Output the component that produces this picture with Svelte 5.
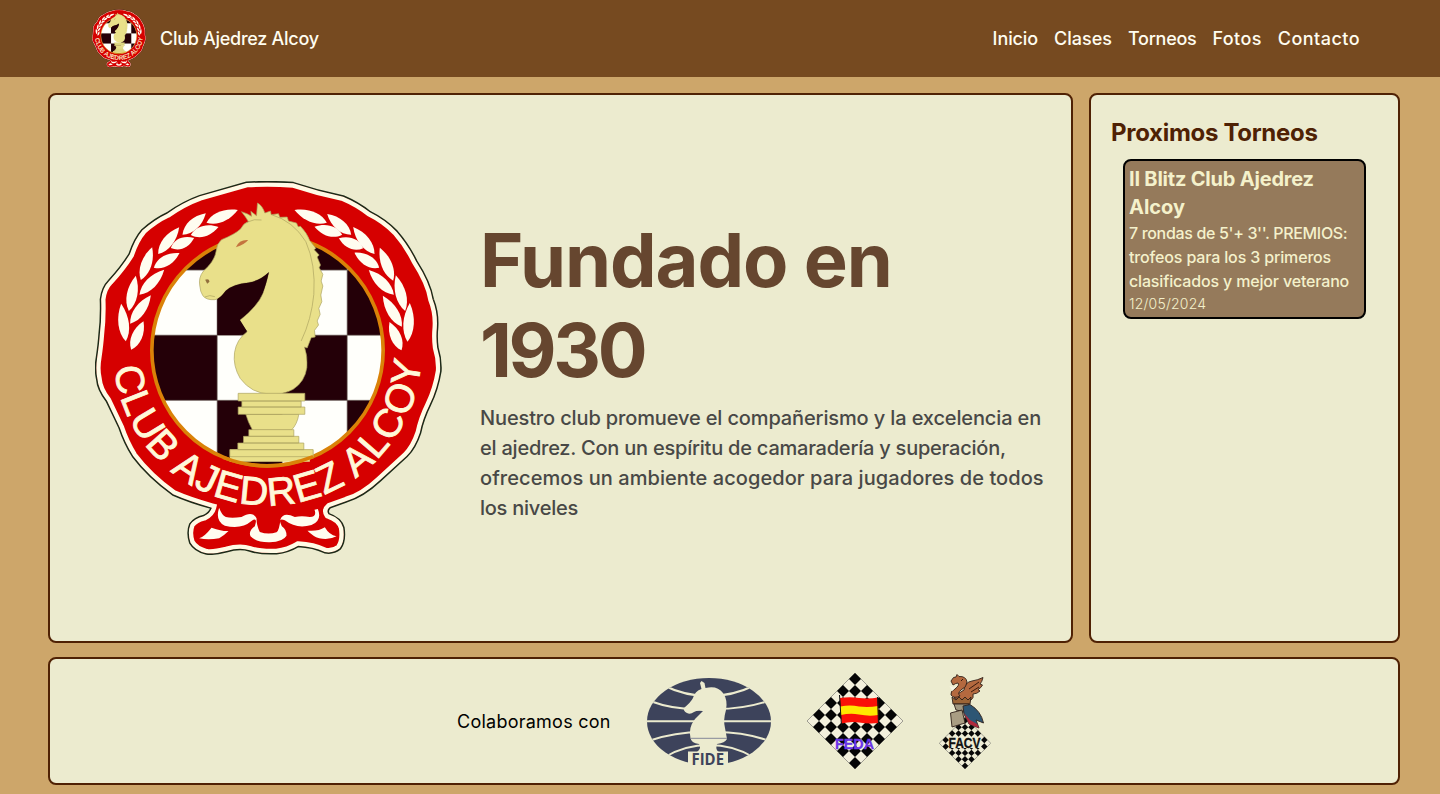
<script>
  const nav = [
    { label: 'Inicio', ls: -0.1 },
    { label: 'Clases', ls: 0 },
    { label: 'Torneos', ls: -0.27 },
    { label: 'Fotos', ls: 0.4 },
    { label: 'Contacto', ls: 0.45 }
  ];

  const outline =
    'M500 36 Q570 32 640 37 Q715 62 790 77 Q835 96 870 124 Q915 146 950 182 Q985 222 1008 270 Q1050 335 1058 385 Q1074 425 1071 470 Q1068 500 1072 530 Q1083 565 1081 600 Q1072 655 1050 700 Q1028 745 1020 785 Q1005 830 980 855 L900 928 Q850 975 800 990 L750 1008 Q738 1018 746 1030 Q782 1042 790 1070 Q796 1110 780 1132 Q760 1148 735 1143 Q700 1126 655 1124 Q625 1142 590 1146 Q540 1148 510 1138 Q480 1128 440 1140 Q400 1150 380 1147 Q345 1138 332 1115 Q322 1085 332 1060 Q345 1042 372 1036 Q392 1026 396 1010 Q330 992 280 970 Q205 915 160 855 Q135 815 120 770 L82 690 Q55 655 53 625 Q46 595 52 560 Q58 520 60 490 Q66 440 64 385 Q68 350 88 330 Q125 290 150 250 Q165 205 188 178 Q225 145 262 128 Q310 94 360 76 Z';

  const leaves = [
    [380, 155, 474, 117], [308, 191, 378, 127], [235, 249, 298, 169], [183, 327, 217, 229], [147, 420, 168, 314], [138, 511, 124, 398],
    [333, 192, 416, 168], [273, 231, 343, 201], [222, 290, 299, 246], [179, 371, 253, 296], [151, 458, 213, 373], [154, 536, 191, 451],
    [741, 155, 644, 117], [814, 191, 742, 129], [884, 249, 820, 168], [940, 329, 900, 230], [976, 420, 948, 313], [983, 512, 990, 396],
    [787, 191, 704, 167], [850, 232, 777, 202], [898, 290, 824, 245], [942, 371, 867, 297], [966, 467, 909, 374], [965, 538, 929, 453]
  ];

  function leaf([x1, y1, x2, y2]) {
    const dx = x2 - x1, dy = y2 - y1, l = Math.hypot(dx, dy);
    const nx = (-dy / l) * 21, ny = (dx / l) * 21;
    const p = (t, s) => `${(x1 + dx * t + nx * s).toFixed(1)} ${(y1 + dy * t + ny * s).toFixed(1)}`;
    return `M${x1} ${y1}C${p(0.25, 1)} ${p(0.65, 1)} ${x2} ${y2}C${p(0.65, -1)} ${p(0.25, -1)} ${x1} ${y1}Z`;
  }

  const board = [];
  for (let r = 0; r < 5; r++)
    for (let c = 0; c < 4; c++) if ((r + c) % 2 === 0) board.push([217 + c * 195, 102 + r * 195.3]);

  const cells = [];
  for (let r = 0; r < 8; r++) for (let c = 0; c < 8; c++) if ((r + c) % 2 === 0) cells.push([c, r]);
</script>

{#snippet crest(id, cls, rim)}
  <svg class={cls} viewBox="46 30 1040 1122" role="img" aria-label="Escudo">
    <defs>
      <clipPath id="{id}-edge"><path d={outline} /></clipPath>
      <clipPath id="{id}-disc"><circle cx="563" cy="538" r="345" /></clipPath>
      <path id="{id}-arc" d="M101 541 A462 462 0 0 0 1025 541" />
    </defs>
    <path d={outline} fill="#d60000" stroke="#1d2a18" stroke-width="9" />
    <g clip-path="url(#{id}-edge)">
      <path d={outline} fill="#d60000" stroke="#fffbe6" stroke-width={rim} />
    </g>
    {#each leaves as l}
      <path d={leaf(l)} fill="#fffdf0" />
    {/each}
    <circle cx="563" cy="538" r="347" fill="#fffffb" />
    <g clip-path="url(#{id}-disc)">
      {#each board as [x, y]}
        <rect {x} {y} width="195" height="195.3" fill="#240008" />
      {/each}
      <path d="M412 180V900M607 180V900M802 180V900M200 297H930M200 492.600H930M200 688H930" stroke="#675b55" stroke-width="2" fill="none" />
    </g>
    <circle cx="563" cy="538" r="347" fill="none" stroke="#da8208" stroke-width="11" />
    <g fill="#e9e08a" stroke="#aaa25f" stroke-width="2">
      <path d="M533 96 Q548 104 555 126 L572 120 L574 131 L596 128 L600 139 L622 138 L626 150 L650 156 L655 167 L662 166 Q682 187 690 209 L708 232 L703 236 L718 252 L712 258 L722 282 L718 290 L729 310 L724 330 L729 345 L723 372 L726 392 L717 412 L721 430 L712 450 L716 462 L704 478 L706 498 L694 500 L682 531 L674 528 Q684 556 681 590 Q675 632 640 655 Q610 672 570 669 Q515 668 481 622 Q459 585 464 545 Q470 505 502 482 L477 450 Q535 405 550 365 Q560 335 567 304 Q540 330 505 335 Q460 339 438 359 Q420 384 405 386 Q380 388 369 374 Q361 362 360 345 Q355 320 371 300 Q405 270 409 240 Q411 218 425 206 Q465 190 482 174 Q492 155 506 152 Q498 138 485 122 Q505 128 515 136 L513 121 L530 134 Z" />
      <path d="M450 835H700V858H690V872H450Z" stroke="none" />
      <path d="M498 730H657Q652 760 635 777H518Q505 755 498 730Z" />
      <path d="M475 667H675V690H475ZM486 690H664V708H486ZM475 708H675V730H475ZM507 776H642V796H507ZM491 796H657V816H491ZM474 816H672V836H474ZM450 836H700V857H450Z" />
      <path d="M575 131Q640 150 678 212Q708 280 702 370Q695 445 664 510M500 154Q525 142 545 147M375 378Q390 370 405 377" fill="none" />
    </g>
    <path d="M468 229Q478 205 505 207Q495 220 468 229Z" fill="#c4743e" />
    <path d="M376 326Q388 322 389 332L382 338Z" fill="#926f3c" />
    <path d="M567 304Q558 345 548 367Q525 412 480 446L501 480Q485 491 476 492H413V384Q426 376 438 359Q460 339 505 335Q540 330 567 304Z" fill="#240008" />
    <path d="M430 859Q563 911 700 857" fill="none" stroke="#da8208" stroke-width="11" />
    <text font-family="Liberation Sans, sans-serif" font-size="119" fill="#fff8d9" stroke="#fff8d9" stroke-width="2.500" textLength="1372">
      <textPath href="#{id}-arc" startOffset="50" textLength="1372">CLUB AJEDREZ ALCOY</textPath>
    </text>
    <g fill="#fffdf0">
      <path d="M418 1010Q405 1050 435 1064Q485 1076 515 1050Q535 1036 525 1066Q505 1080 512 1096Q530 1115 570 1114Q610 1112 620 1094Q620 1075 606 1066Q592 1038 615 1048Q650 1075 695 1062Q728 1048 714 1014L704 1016Q712 1038 690 1038Q665 1034 645 1038Q610 1022 602 1045Q598 1080 590 1084Q565 1092 540 1083Q530 1064 530 1042Q518 1018 485 1038Q455 1042 438 1038Q425 1032 418 1010Z" />
      <path d="M358 1102Q375 1096 395 1070Q430 1082 446 1080Q432 1094 418 1102Q385 1108 358 1102Z" />
      <path d="M683 1079Q715 1082 735 1069Q748 1092 770 1096Q748 1108 718 1102Q700 1096 683 1079Z" />
    </g>
  </svg>
{/snippet}

<div class="page">
  <header>
    <div class="brand">
      {@render crest('small', 'crest-small', 17)}
      <span>Club Ajedrez Alcoy</span>
    </div>
    <nav>
      {#each nav as item}
        <a href="#top" style="letter-spacing:{item.ls}px">{item.label}</a>
      {/each}
    </nav>
  </header>

  <main>
    <section class="card hero">
      {@render crest('big', 'crest-big', 26)}
      <div class="copy">
        <h1><span>Fundado en</span><br /><span class="year">1930</span></h1>
        <p>
          <span class="l1">Nuestro club promueve el compañerismo y la excelencia en</span>
          <span class="l2">el ajedrez. Con un espíritu de camaradería y superación,</span>
          <span class="l3">ofrecemos un ambiente acogedor para jugadores de todos</span>
          <span class="l4">los niveles</span>
        </p>
      </div>
    </section>

    <aside class="card">
      <h2>Proximos Torneos</h2>
      <article>
        <h3><span class="t1">II Blitz Club Ajedrez</span><span class="t2">Alcoy</span></h3>
        <p>
          <span class="d1">7 rondas de 5'+ 3''. PREMIOS:</span>
          <span class="d2">trofeos para los 3 primeros</span>
          <span class="d3">clasificados y mejor veterano</span>
        </p>
        <small>12/05/2024</small>
      </article>
    </aside>
  </main>

  <footer class="card">
    <span class="with">Colaboramos con</span>
    <svg class="fide" viewBox="0 0 124 90" role="img" aria-label="FIDE">
      <defs><clipPath id="globe"><ellipse cx="62" cy="43.500" rx="62" ry="43.500" /></clipPath></defs>
      <ellipse cx="62" cy="43.500" rx="62" ry="43.500" fill="#3d435b" />
      <g clip-path="url(#globe)" fill="none" stroke="#ecebcf" stroke-width="2">
        <path d="M0 43.200H124M3 23Q30 33 62 31Q95 32 121 23M18 8Q38 18 62 18Q86 18 106 8M3 62.500Q30 53 62 54Q95 53 121 62.500M18 79Q38 67 62 67Q86 67 106 79" />
      </g>
      <path d="M41 73.500H81V90H41Z" fill="#ecebcf" />
      <path d="M54.500 11L53 5L54.500 3L57.500 5L58.500 10Q70 7 76 15Q81 22 79 32Q76 42 78 50L80 61Q78 65 70 66Q68 72 72 74H50Q55 70 52 66Q44 65 43.500 60Q41 50 48 41L56 33Q50 32 47 34Q43 37 40 35Q36 33 37 30Q44 24 46 20Q48 13 54.500 11Z" fill="#ecebcf" />
      <path d="M44 60.300H80" stroke="#858798" stroke-width="1" />
      <text x="44.500" y="87" textLength="32.500" lengthAdjust="spacingAndGlyphs" font-family="Open Sans, sans-serif" font-weight="700" font-size="15.500" fill="#3d435b">FIDE</text>
    </svg>
    <svg class="feda" viewBox="0 0 96 96" role="img" aria-label="FEDA">
      <g transform="translate(48 0) rotate(45) scale(8.485)">
        <rect width="8" height="8" fill="#f3f0dc" stroke="#555" stroke-width=".06" />
        {#each cells as [x, y]}<rect {x} {y} width="1" height="1" fill="#050505" />{/each}
      </g>
      <path d="M33 25Q43 23.500 52 25Q62 26 71 24.500L71.500 50Q62 51 52 49.500Q44 48 34.500 50.500Z" fill="#fa1008" />
      <path d="M33.500 33.500Q43 31.500 52 33.500Q62 34.500 71 33V42Q62 43.500 52 41.500Q43 40 34 42Z" fill="#ffe800" />
      <path d="M32.500 22L34.500 53M70.500 24L71.500 52" stroke="#111" stroke-width="1" />
      <text x="28" y="76.300" textLength="39" lengthAdjust="spacingAndGlyphs" font-family="Liberation Sans, sans-serif" font-size="14" font-weight="700" fill="#6a35e8" stroke="#6a35e8" stroke-width=".3">FEDA</text>
    </svg>
    <svg class="facv" viewBox="0 0 52 96" role="img" aria-label="FACV">
      <g transform="translate(26 44.500) rotate(45) scale(4.550)">
        <rect width="8" height="8" fill="#efedd6" stroke="#555" stroke-width=".1" />
        {#each cells as [x, y]}<rect {x} {y} width="1" height="1" fill="#080808" />{/each}
      </g>
      <path d="M10 64H42V75H10Z" fill="#efedd6" />
      <text x="9.500" y="75" textLength="32" lengthAdjust="spacingAndGlyphs" font-family="Liberation Sans, sans-serif" font-size="14.500" font-weight="700" fill="#111" stroke="#111" stroke-width=".3">FACV</text>
      <g stroke="#30201a" stroke-width=".9" stroke-linejoin="round">
        <path d="M25 17Q26 9 33 8Q39 7 44 4.500Q43 9 41 11L43.500 12Q42 15 39 16.500L41 18Q38 21 34 21Q35 25 32 27L16 26Q14 23 17 22Z" fill="#b4693f" />
        <path d="M12 8L14.500 4.500L17 4L18 1.500L20 3.500Q27 3 28 9Q28 14 22 17Q18 20 21 23Q15 26 12 22Q11 18 16 16Q21 12 19 10Q17 10 14 12Z" fill="#b4693f" />
        <path d="M13 24L17 27L20 24L23 27L26 24L29 27L32 24L31 31H14Z" fill="#9c6435" />
        <path d="M15 31H30L27 40L22 38L17 37Z" fill="#a0967f" />
        <path d="M11.500 40L23 37L26 50L13 54Z" fill="#a99d83" />
        <path d="M24 33L31 31.500Q42 38 44.500 50L37 47L40 55L30 51L25 41Z" fill="#2d5674" />
      </g>
      <path d="M25 40L31 47L38 51L40 55L30 51Z" fill="#b0283c" />
      <path d="M10.500 13L15 14.500L18 12.500L13.500 18" fill="#f7f5e6" />
      <path d="M40 9L30 16M40 14L32 19M24 6L22 8" stroke="#3a1b0e" stroke-width="1" />
    </svg>
  </footer>
</div>

<style>
  :global(body) { background: #cda66a; }
  .page {
    box-sizing: border-box;
    height: 794px;
    display: flex;
    flex-direction: column;
    overflow: hidden;
    font-family: Inter, 'Open Sans', sans-serif;
  }
  header {
    box-sizing: border-box;
    flex: none;
    height: 77px;
    background: #764a20;
    display: flex;
    justify-content: space-between;
    align-items: center;
    padding: 0 80px 0 92px;
    color: #fffdf0;
    font-size: 18px;
    font-weight: 500;
  }
  .brand { display: flex; align-items: center; gap: 14px; letter-spacing: -0.28px; }
  .crest-small { width: 54px; height: 59px; }
  nav { display: flex; gap: 16px; }
  a { color: inherit; text-decoration: none; }
  span, a { white-space: nowrap; }
  main { display: grid; grid-template-columns: 1025px 311px; gap: 16px; padding: 16px 40px 14px 48px; height: 550px; }
  .card { box-sizing: border-box; background: #ecebcf; border: 2px solid #4f2104; border-radius: 8px; }
  .hero { display: flex; align-items: center; padding-left: 45px; }
  .crest-big { width: 347px; height: 374px; flex: none; }
  .copy { margin-left: 38px; padding-top: 2px; }
  h1, h2, h3, p { margin: 0; }
  h1 { font-size: 74px; line-height: 90px; font-weight: 700; color: #66462f; letter-spacing: -1.05px; }
  .year { letter-spacing: -3.3px; }
  .copy p { margin-top: 8px; font-size: 20px; line-height: 30px; font-weight: 500; color: #484846; }
  p span, h3 span { display: block; }
  .l1 { letter-spacing: -0.135px; }
  .l2 { letter-spacing: -0.225px; }
  .l3 { letter-spacing: 0.065px; }
  .l4 { letter-spacing: -0.25px; }
  aside { padding: 20px; }
  h2 { margin-top: 1px; font-size: 24px; line-height: 34px; font-weight: 700; color: #4f2104; letter-spacing: -0.3px; }
  article { box-sizing: border-box; width: 243px; height: 160px; margin: 9px 0 0 12px; padding: 4px; border: 2px solid #000; border-radius: 8px; background: #957a5b; color: #f4f1cb; }
  h3 { font-size: 20px; line-height: 28px; font-weight: 700; }
  .t1 { letter-spacing: -0.2px; }
  article p { font-size: 16px; line-height: 24px; font-weight: 500; }
  .d1 { letter-spacing: -0.34px; }
  .d2 { letter-spacing: -0.15px; }
  .d3 { letter-spacing: -0.16px; }
  small { display: block; font-size: 14px; line-height: 21px; font-weight: 300; letter-spacing: 0.2px; }
  footer { flex: none; height: 128px; margin: 0 40px 0 48px; display: flex; align-items: center; padding-left: 407px; }
  .with { font-size: 18px; width: 154px; margin-right: 36px; letter-spacing: 0.25px; }
  .fide { width: 124px; height: 90px; margin: 4px 36px 0 0; overflow: visible; }
  .feda { width: 96px; height: 96px; margin-right: 36px; }
  .facv { width: 52px; height: 96px; }
</style>
